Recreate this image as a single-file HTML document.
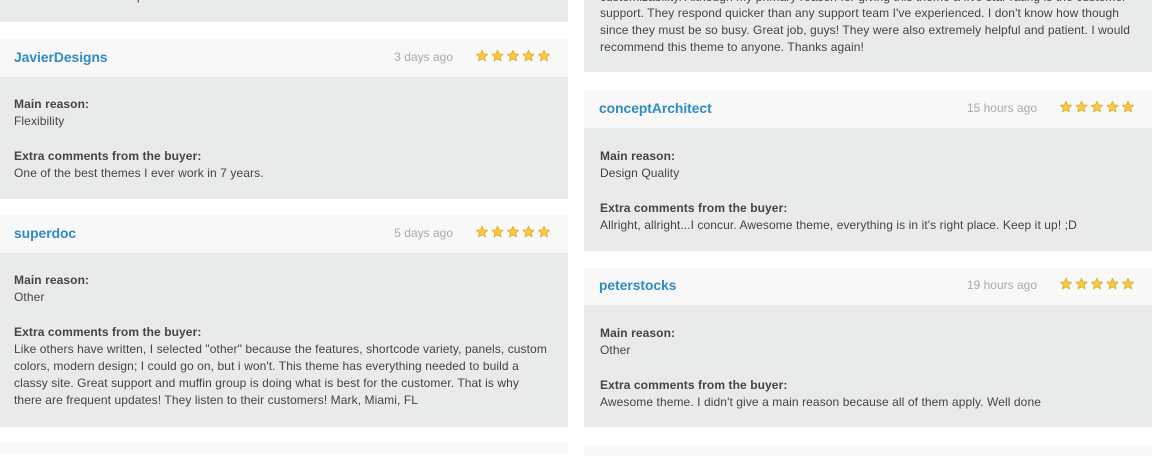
<!DOCTYPE html>
<html><head><meta charset="utf-8"><style>
*{margin:0;padding:0;box-sizing:border-box}
body{width:1152px;height:450px;overflow:hidden;background:#fff;position:relative;font-family:"Liberation Sans",Arial,sans-serif;font-size:12px;color:#444}
.b{position:absolute;background:#e9ebea}
.h{position:absolute;background:#f8f8f8}
.t{position:absolute;white-space:nowrap;line-height:14px;letter-spacing:0.09px}
.n{position:absolute;white-space:nowrap;font-weight:bold;font-size:13.8px;color:#2e8bc5;line-height:16px}
.d{position:absolute;white-space:nowrap;color:#aaa;line-height:14px;text-align:right;width:100px}
.s{position:absolute;width:78px;height:14px}
b{font-weight:bold;color:#444}
</style></head><body>
<svg width="0" height="0" style="position:absolute"><defs><g id="st"><path d="M7 1.3 L8.6 4.9 L12.6 5.3 L9.6 7.9 L10.5 11.9 L7 9.8 L3.5 11.9 L4.4 7.9 L1.4 5.3 L5.4 4.9 Z" fill="#f9cc3e" stroke="#e2ac37" stroke-width="0.9" stroke-linejoin="round"/></g>
<g id="five"><use href="#st"/><use href="#st" x="15.5"/><use href="#st" x="31"/><use href="#st" x="46.5"/><use href="#st" x="62"/></g></defs></svg>

<div class="b" style="left:0;top:0;width:568px;height:22px"></div>
<div class="t" style="left:14px;top:-11px">client with the endless possibilities.</div>

<div class="h" style="left:0;top:39px;width:568px;height:38px"></div>
<div class="n" style="left:14px;top:50px">JavierDesigns</div>
<div class="d" style="left:353px;top:50px">3 days ago</div>
<svg class="s" style="left:475px;top:49px"><use href="#five"/></svg>
<div class="b" style="left:0;top:77px;width:568px;height:122px"></div>
<div class="t" style="left:14px;top:97px"><b>Main reason:</b></div>
<div class="t" style="left:14px;top:114px">Flexibility</div>
<div class="t" style="left:14px;top:149px"><b>Extra comments from the buyer:</b></div>
<div class="t" style="left:14px;top:166px">One of the best themes I ever work in 7 years.</div>

<div class="h" style="left:0;top:215px;width:568px;height:38px"></div>
<div class="n" style="left:14px;top:226px">superdoc</div>
<div class="d" style="left:353px;top:226px">5 days ago</div>
<svg class="s" style="left:475px;top:225px"><use href="#five"/></svg>
<div class="b" style="left:0;top:253px;width:568px;height:174px"></div>
<div class="t" style="left:14px;top:273px"><b>Main reason:</b></div>
<div class="t" style="left:14px;top:290px">Other</div>
<div class="t" style="left:14px;top:325px"><b>Extra comments from the buyer:</b></div>
<div class="t" style="left:14px;top:342px">Like others have written, I selected "other" because the features, shortcode variety, panels, custom</div>
<div class="t" style="left:14px;top:359px">colors, modern design; I could go on, but i won't. This theme has everything needed to build a</div>
<div class="t" style="left:14px;top:376px">classy site. Great support and muffin group is doing what is best for the customer. That is why</div>
<div class="t" style="left:14px;top:393px">there are frequent updates! They listen to their customers! Mark, Miami, FL</div>
<div class="h" style="left:0;top:443px;width:568px;height:10px"></div>

<div class="b" style="left:584px;top:0;width:568px;height:72px"></div>
<div class="t" style="left:600px;top:-10px">customizability. Although my primary reason for giving this theme a five star rating is the customer</div>
<div class="t" style="left:600px;top:6px">support. They respond quicker than any support team I've experienced. I don't know how though</div>
<div class="t" style="left:600px;top:23px">since they must be so busy. Great job, guys! They were also extremely helpful and patient. I would</div>
<div class="t" style="left:600px;top:40px">recommend this theme to anyone. Thanks again!</div>

<div class="h" style="left:584px;top:91px;width:568px;height:37px"></div>
<div class="n" style="left:599px;top:101px">conceptArchitect</div>
<div class="d" style="left:937px;top:101px">15 hours ago</div>
<svg class="s" style="left:1059px;top:100px"><use href="#five"/></svg>
<div class="b" style="left:584px;top:128px;width:568px;height:123px"></div>
<div class="t" style="left:600px;top:149px"><b>Main reason:</b></div>
<div class="t" style="left:600px;top:166px">Design Quality</div>
<div class="t" style="left:600px;top:201px"><b>Extra comments from the buyer:</b></div>
<div class="t" style="left:600px;top:218px">Allright, allright...I concur. Awesome theme, everything is in it's right place. Keep it up! ;D</div>

<div class="h" style="left:584px;top:268px;width:568px;height:37px"></div>
<div class="n" style="left:599px;top:278px">peterstocks</div>
<div class="d" style="left:937px;top:278px">19 hours ago</div>
<svg class="s" style="left:1059px;top:277px"><use href="#five"/></svg>
<div class="b" style="left:584px;top:305px;width:568px;height:122px"></div>
<div class="t" style="left:600px;top:326px"><b>Main reason:</b></div>
<div class="t" style="left:600px;top:343px">Other</div>
<div class="t" style="left:600px;top:378px"><b>Extra comments from the buyer:</b></div>
<div class="t" style="left:600px;top:395px">Awesome theme. I didn't give a main reason because all of them apply. Well done</div>
<div class="h" style="left:584px;top:446px;width:568px;height:10px"></div>
</body></html>
